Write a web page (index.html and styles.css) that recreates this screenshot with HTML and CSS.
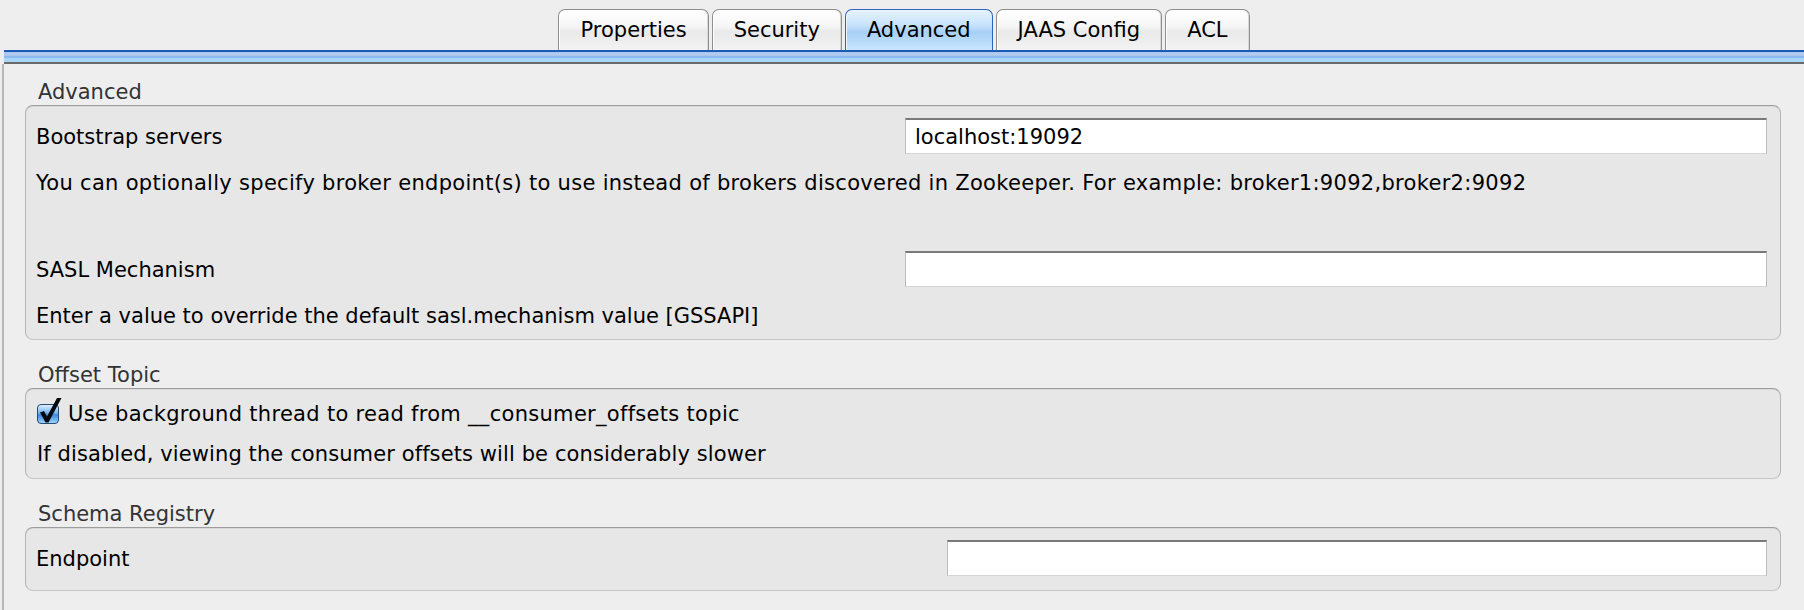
FILE: index.html
```html
<!DOCTYPE html>
<html>
<head>
<meta charset="utf-8">
<link rel="stylesheet" href="styles.css">
</head>
<body>
<div class="tabs">
  <div class="tab">Properties</div>
  <div class="tab">Security</div>
  <div class="tab tab-selected">Advanced</div>
  <div class="tab">JAAS Config</div>
  <div class="tab">ACL</div>
</div>
<div class="band"></div>
<div class="panel">
  <section class="group">
    <div class="group-title">Advanced</div>
    <div class="group-box box-advanced">
      <div class="field-row">
        <span class="label">Bootstrap servers</span>
        <div class="input">localhost:19092</div>
      </div>
      <div class="desc desc-wide">You can optionally specify broker endpoint(s) to use instead of brokers discovered in Zookeeper. For example: broker1:9092,broker2:9092</div>
      <div class="field-row row-spaced">
        <span class="label">SASL Mechanism</span>
        <div class="input"></div>
      </div>
      <div class="desc">Enter a value to override the default sasl.mechanism value [GSSAPI]</div>
    </div>
  </section>
  <section class="group">
    <div class="group-title">Offset Topic</div>
    <div class="group-box box-offset">
      <label class="check-row">
        <svg class="checkbox" width="26" height="30" viewBox="0 0 26 30">
          <defs>
            <linearGradient id="cbg" x1="0" y1="0" x2="0" y2="1">
              <stop offset="0" stop-color="#e2f1fe"/>
              <stop offset="0.45" stop-color="#74b4f2"/>
              <stop offset="0.55" stop-color="#3a8ae2"/>
              <stop offset="1" stop-color="#9fd8fc"/>
            </linearGradient>
          </defs>
          <rect x="1.5" y="6.5" width="21" height="19" rx="3.5" fill="url(#cbg)" stroke="#2b4a78"/>
          <path d="M4 14.5 L8 13 L11 18.5 L21 0 L25.5 0 L12.5 24.5 L9.5 24.5 Z" fill="#08080f"/>
        </svg>
        <span class="check-label">Use background thread to read from __consumer_offsets topic</span>
      </label>
      <div class="desc desc-check">If disabled, viewing the consumer offsets will be considerably slower</div>
    </div>
  </section>
  <section class="group">
    <div class="group-title">Schema Registry</div>
    <div class="group-box box-schema">
      <div class="field-row">
        <span class="label">Endpoint</span>
        <div class="input input-narrow"></div>
      </div>
    </div>
  </section>
</div>
</body>
</html>
```

FILE: styles.css
```css
html, body {
  margin: 0;
  padding: 0;
}

body {
  background: #eeeeee;
  font-family: "DejaVu Sans", "Noto Sans", sans-serif;
  font-size: 21px;
  color: #000;
  width: 1804px;
  height: 610px;
  overflow: hidden;
}

.tabs {
  display: flex;
  justify-content: center;
  gap: 3px;
  padding-top: 9px;
  height: 41px;
  padding-left: 4px;
}

.tab {
  height: 41px;
  box-sizing: border-box;
  padding: 0 21px;
  border: 1px solid #8f8f8f;
  border-bottom: none;
  border-radius: 7px 7px 0 0;
  background: linear-gradient(to bottom, #ffffff 0%, #f6f6f6 40%, #e9e9e9 55%, #f3f3f3 100%);
  box-shadow: inset 1px 1px 0 #ffffff, inset -1px 0 0 #d8d8d8;
  display: flex;
  align-items: center;
  color: #000;
}

.tab-selected {
  border-color: #2d63c0;
  background: linear-gradient(to bottom, #e6f3fe 0%, #c6e1fb 40%, #a7cff6 55%, #c9e6fd 100%);
  box-shadow: inset 1px 1px 0 #eef7ff;
}

.band {
  height: 14px;
  margin-left: 4px;
  background: linear-gradient(to bottom,
    #1b5bb7 0px, #1b5bb7 2px,
    #a8c4ec 2px, #b3cdf0 4px, #a8c4ec 6px,
    #8bbaf0 6px, #8bbaf0 8px,
    #a9d5f7 8px, #a9d5f7 12px,
    #6b6b6b 12px, #6b6b6b 14px);
}

.panel {
  margin-left: 2px;
  border-left: 2px solid #b7b7b7;
  padding: 18px 23px 0 21px;
  height: 528px;
}

.group + .group {
  margin-top: 25px;
}

.group-title {
  height: 20px;
  line-height: 20px;
  margin: 0 0 3px 13px;
  color: #333333;
}

.group-box {
  border: 1px solid #b4b4b4;
  border-top-color: #9d9d9d;
  border-bottom-color: #c6c6c6;
  border-radius: 8px;
  background: #e7e7e7;
  box-shadow: inset 0 1px 0 #d8d8d8;
  padding: 12px 13px 13px 10px;
}

.box-offset {
  padding-top: 13px;
  padding-bottom: 14px;
}

.box-schema {
  padding-top: 12px;
  padding-bottom: 14px;
}

.field-row {
  display: flex;
  align-items: center;
  height: 36px;
}

.label {
  line-height: 20px;
  padding-top: 2px;
}

.row-spaced {
  margin-top: 58px;
}

.input {
  margin-left: auto;
  width: 862px;
  height: 36px;
  box-sizing: border-box;
  background: #ffffff;
  border: 1px solid #bcbcbc;
  border-top: 2px solid #7a7a7a;
  border-bottom-color: #d4d4d4;
  padding-left: 9px;
  display: flex;
  align-items: center;
}

.input-narrow {
  width: 820px;
}

.desc {
  height: 20px;
  line-height: 20px;
  margin-top: 19px;
  white-space: nowrap;
}

.desc-wide {
  letter-spacing: 0.3px;
}

.check-row {
  display: flex;
  align-items: center;
  height: 24px;
}

.checkbox {
  flex: none;
  margin-top: -3px;
}

.check-label {
  margin-left: 6px;
  line-height: 20px;
  letter-spacing: 0.3px;
}

.desc-check {
  margin-top: 18px;
  padding-left: 1px;
  letter-spacing: 0.1px;
}
```
